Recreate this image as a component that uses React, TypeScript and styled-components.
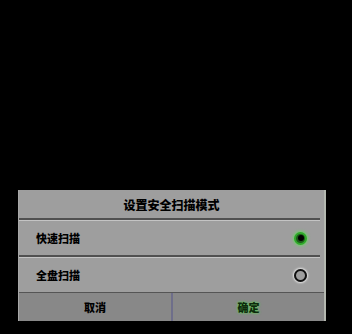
import styled, { createGlobalStyle } from "styled-components";

const GlobalStyle = createGlobalStyle`
  html, body {
    margin: 0;
    padding: 0;
    background: #000000;
  }
  body {
    font-family: "Noto Sans CJK SC", "Liberation Sans", sans-serif;
  }
`;

const Screen = styled.div`
  width: 352px;
  height: 334px;
  display: flex;
  flex-direction: column;
  justify-content: flex-end;
  padding: 0 26px 13px 18px;
  box-sizing: border-box;
`;

const Dialog = styled.div`
  width: 308px;
  background: #9e9e9e;
  border-right: 2px solid #b4b8b0;
  border-left: 1px solid #a8a8a8;
  box-sizing: border-box;
  display: flex;
  flex-direction: column;
`;

const Title = styled.div`
  height: 28px;
  display: flex;
  align-items: center;
  justify-content: center;
  font-size: 12px;
  font-weight: 900;
  color: #000000;
`;

const Separator = styled.div`
  height: 2px;
  margin-right: 4px;
  background: #505050;
  border-bottom: 1px solid #c4c4c4;
`;

const Row = styled.div`
  height: 34px;
  display: flex;
  align-items: center;
  justify-content: space-between;
  padding: 0 17px 0 17px;
  font-size: 11px;
  font-weight: 900;
  color: #000000;
`;

const Radio = styled.span<{ $checked?: boolean }>`
  width: 13px;
  height: 13px;
  border-radius: 50%;
  box-sizing: border-box;
  display: flex;
  align-items: center;
  justify-content: center;
  border: 2px solid ${({ $checked }) => ($checked ? "#2fa82a" : "#111111")};
  background: ${({ $checked }) => ($checked ? "#1d5a1a" : "transparent")};
  box-shadow: ${({ $checked }) =>
    $checked ? "0 0 3px 1px #6fd06a" : "0 0 2px 1px #e8e8e8"};

  &::after {
    content: "";
    width: 6px;
    height: 6px;
    border-radius: 50%;
    background: ${({ $checked }) => ($checked ? "#000000" : "transparent")};
  }
`;

const Footer = styled.div`
  height: 28px;
  display: grid;
  grid-template-columns: 152px 1fr;
  background: #888888;
  border-top: 1px solid #555555;
`;

const FooterButton = styled.div<{ $primary?: boolean }>`
  display: flex;
  align-items: center;
  justify-content: center;
  font-size: 11px;
  font-weight: 900;
  color: ${({ $primary }) => ($primary ? "#0e2a0c" : "#000000")};
  text-shadow: ${({ $primary }) =>
    $primary ? "0 0 2px #5fc25a, 0 0 3px #5fc25a" : "none"};
  & + & {
    border-left: 2px solid #6e6e8a;
  }
`;

export default function App() {
  return (
    <>
      <GlobalStyle />
      <Screen>
        <Dialog>
          <Title>设置安全扫描模式</Title>
          <Separator />
          <Row>
            快速扫描
            <Radio $checked />
          </Row>
          <Separator />
          <Row>
            全盘扫描
            <Radio />
          </Row>
          <Footer>
            <FooterButton>取消</FooterButton>
            <FooterButton $primary>确定</FooterButton>
          </Footer>
        </Dialog>
      </Screen>
    </>
  );
}
